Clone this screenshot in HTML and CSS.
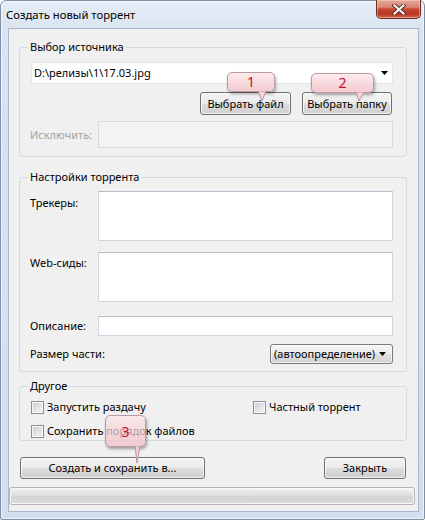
FILE: index.html
```html
<!DOCTYPE html>
<html lang="ru">
<head>
<meta charset="utf-8">
<title>Создать новый торрент</title>
<link rel="stylesheet" href="styles.css">
</head>
<body>
<div class="window">
  <div class="titlebar">
    <span class="title">Создать новый торрент</span>
    <div class="close">
      <svg width="14" height="11" viewBox="0 0 14 11"><path d="M2.5 1.5 L11.5 9.5 M11.5 1.5 L2.5 9.5" stroke="#5a2a22" stroke-width="4" stroke-linecap="square"/><path d="M2.5 1.5 L11.5 9.5 M11.5 1.5 L2.5 9.5" stroke="#f4f4f4" stroke-width="2.2" stroke-linecap="square"/></svg>
    </div>
  </div>
  <div class="client">
    <div class="content">
      <fieldset class="group g-source">
        <legend>Выбор источника</legend>
        <div class="combo">
          <span class="combo-text">D:\релизы\1\17.03.jpg</span>
          <svg class="arrow" width="7" height="4" viewBox="0 0 7 4"><path d="M0 0 H7 L3.5 4 Z" fill="#000"/></svg>
        </div>
        <div class="btn-row">
          <div class="btn btn-file">Выбрать файл</div>
          <div class="btn btn-folder">Выбрать папку</div>
        </div>
        <div class="row row-excl">
          <span class="lbl lbl-disabled">Исключить:</span>
          <div class="field field-disabled"></div>
        </div>
      </fieldset>

      <fieldset class="group g-settings">
        <legend>Настройки торрента</legend>
        <div class="row row-top row-trackers">
          <span class="lbl">Трекеры:</span>
          <div class="field area"></div>
        </div>
        <div class="row row-top row-seeds">
          <span class="lbl">Web-сиды:</span>
          <div class="field area"></div>
        </div>
        <div class="row row-desc">
          <span class="lbl">Описание:</span>
          <div class="field line"></div>
        </div>
        <div class="row row-size">
          <span class="lbl">Размер части:</span>
          <div class="select">
            <span>(автоопределение)</span>
            <svg class="arrow" width="7" height="4" viewBox="0 0 7 4"><path d="M0 0 H7 L3.5 4 Z" fill="#000"/></svg>
          </div>
        </div>
      </fieldset>

      <fieldset class="group g-other">
        <legend>Другое</legend>
        <div class="checks">
          <div class="check"><span class="box"></span><span>Запустить раздачу</span></div>
          <div class="check"><span class="box"></span><span>Частный торрент</span></div>
          <div class="check"><span class="box"></span><span>Сохранить порядок файлов</span></div>
        </div>
      </fieldset>

      <div class="bottom-row">
        <div class="btn btn-create">Создать и сохранить в...</div>
        <div class="btn btn-close">Закрыть</div>
      </div>
    </div>
    <div class="progress"></div>
  </div>

  <div class="callout c1">1
    <svg class="tail" width="14" height="12" viewBox="0 0 14 12"><path d="M2 0 L10 0 L6 10 Z" fill="#f6d3d7" stroke="#b89aa0" stroke-width="1"/></svg>
  </div>
  <div class="callout c2">2
    <svg class="tail" width="14" height="12" viewBox="0 0 14 12"><path d="M2 0 L10 0 L5 9 Z" fill="#f6d3d7" stroke="#b89aa0" stroke-width="1"/></svg>
  </div>
  <div class="callout c3">3
    <svg class="tail" width="10" height="18" viewBox="0 0 10 18"><path d="M2 0 L7 0 L4 17 Z" fill="#f3ccd1" stroke="#b89aa0" stroke-width="1"/></svg>
  </div>
</div>
</body>
</html>
```

FILE: styles.css
```css
* { box-sizing: border-box; }
html, body { margin: 0; padding: 0; }
body {
  width: 425px;
  height: 520px;
  overflow: hidden;
  background: #ffffff;
  font-family: "Noto Sans", "Open Sans", "DejaVu Sans", sans-serif;
  font-size: 11px;
  color: #000;
}

.window {
  position: relative;
  width: 425px;
  height: 520px;
  display: flex;
  flex-direction: column;
  border: 1px solid #7f8fa6;
  border-radius: 6px 6px 2px 2px;
  background: linear-gradient(180deg, #e6edf6 0px, #d9e4f1 30px, #d2deed 100%);
  box-shadow: inset 0 0 0 1px rgba(255,255,255,0.6);
}

.titlebar {
  height: 27px;
  display: flex;
  align-items: flex-start;
  flex-shrink: 0;
}
.title {
  margin-top: 6px;
  padding-left: 5px;
  line-height: 16px;
  font-size: 11.3px;
  color: #000;
}
.close {
  margin-left: auto;
  margin-right: 3px;
  margin-top: -1px;
  width: 45px;
  height: 19px;
  border: 1px solid #6b2e26;
  border-top: none;
  border-radius: 0 0 5px 5px;
  background: linear-gradient(180deg, #e7a897 0%, #d88573 40%, #c74a33 50%, #b83522 78%, #cf6a4e 100%);
  box-shadow: inset 0 0 0 1px rgba(255,220,210,0.45);
  display: flex;
  align-items: center;
  justify-content: center;
}

.client {
  flex: 1;
  margin: 0 5px 7px 7px;
  background: #f0f0f0;
  border: 1px solid #a9b8cb;
  display: flex;
  flex-direction: column;
}
.content {
  padding: 10px 11px 0 10px;
  display: flex;
  flex-direction: column;
}

.group {
  margin: 0;
  padding: 0 13px 0 10px;
  border: 1px solid #d3dae2;
  border-radius: 3px;
  min-width: 0;
}
.group legend {
  padding: 0 2px;
  margin-left: -2px;
  line-height: 16px;
  color: #000;
}
.g-source { padding-top: 7px; padding-bottom: 8px; }
.g-settings { margin-top: 12px; padding-top: 6px; padding-bottom: 7px; }
.g-other { margin-top: 6px; padding-top: 5px; padding-bottom: 1px; }

.combo {
  margin-left: 1px;
  height: 22px;
  background: #fff;
  border: 1px solid #e4e4e4;
  display: flex;
  align-items: center;
  padding: 0 4px 0 2px;
}
.combo-text { flex: 1; line-height: 16px; }
.arrow { flex-shrink: 0; }

.btn-row {
  margin-top: 8px;
  display: flex;
  justify-content: flex-end;
  gap: 11px;
  margin-right: 1px;
}
.btn {
  height: 23px;
  border: 1px solid #707070;
  border-radius: 3px;
  background: linear-gradient(180deg, #f3f3f3 0%, #ebebeb 48%, #dddddd 52%, #cfcfcf 100%);
  box-shadow: inset 0 0 0 1px rgba(255,255,255,0.7);
  display: flex;
  align-items: center;
  justify-content: center;
  color: #000;
  line-height: 16px;
}
.btn-file { width: 91px; }
.btn-folder { width: 90px; }

.row { display: flex; align-items: center; }
.row-top { align-items: flex-start; }
.lbl { width: 68px; flex-shrink: 0; line-height: 16px; }
.lbl-disabled { color: #a3a3a3; }
.row-excl { margin-top: 6px; }

.field {
  flex: 1;
  background: #fff;
  border: 1px solid #cfd8e2;
  border-top-color: #b4bfcc;
}
.field-disabled {
  height: 27px;
  background: #f3f3f3;
  border: 1px solid #d9d9d9;
}
.area { height: 50px; }
.row-top .lbl { margin-top: 4px; }
.row-seeds { margin-top: 11px; }
.row-seeds .lbl { margin-top: 3px; }
.row-desc { margin-top: 14px; }
.line { height: 20px; }
.row-size { margin-top: 8px; justify-content: space-between; }
.row-size .lbl { width: auto; }

.select {
  width: 123px;
  height: 20px;
  border: 1px solid #7a7a7a;
  border-radius: 3px;
  background: linear-gradient(180deg, #f4f4f4 0%, #ececec 48%, #dfdfdf 52%, #d2d2d2 100%);
  box-shadow: inset 0 0 0 1px rgba(255,255,255,0.7);
  display: flex;
  align-items: center;
  justify-content: space-between;
  padding: 0 6px 0 3px;
  line-height: 16px;
}

.checks {
  display: grid;
  grid-template-columns: 222px 1fr;
  row-gap: 8px;
}
.check {
  margin-left: 1px;
  height: 16px;
  display: flex;
  align-items: center;
  gap: 3px;
  line-height: 16px;
}
.box {
  width: 13px;
  height: 13px;
  border: 1px solid #8e8f8f;
  background: linear-gradient(135deg, #c9ccd1 0%, #e3e4e6 55%, #f6f6f6 100%);
  box-shadow: inset 0 0 0 1px #f7f7f7;
  flex-shrink: 0;
}

.bottom-row {
  margin-top: 16px;
  display: flex;
  justify-content: space-between;
  padding: 0 1px;
}
.bottom-row .btn { height: 22px; }
.btn-create { width: 185px; }
.btn-close { width: 82px; }

.progress {
  margin: 8px 3px 0 0;
  height: 18px;
  border: 1px solid #b3b3b3;
  border-radius: 3px;
  background: linear-gradient(180deg, #f2f2f2 0%, #e0e0e0 45%, #d3d3d3 55%, #dcdcdc 100%);
  box-shadow: inset 0 0 0 1px rgba(255,255,255,0.8);
}

.callout {
  position: absolute;
  border: 1px solid #b89ca2;
  border-radius: 5px;
  background: linear-gradient(180deg, rgba(252,232,235,0.92) 0%, rgba(244,200,206,0.92) 100%);
  box-shadow: 1px 2px 3px rgba(0,0,0,0.35);
  color: #c8102e;
  font-size: 14px;
  line-height: 16px;
  text-align: center;
  padding-top: 1px;
}
.callout .tail { position: absolute; }
.c1 { left: 226px; top: 71px; width: 48px; height: 20px; }
.c1 .tail { left: 28px; top: 18px; }
.c2 { left: 310px; top: 72px; width: 63px; height: 20px; }
.c2 .tail { left: 42px; top: 18px; }
.c3 {
  left: 104px; top: 414px; width: 41px; height: 32px;
  padding-top: 8px;
  background: linear-gradient(180deg, rgba(252,228,232,0.7) 0%, rgba(240,190,198,0.75) 100%);
}
.c3 .tail { left: 27px; top: 30px; }
```
